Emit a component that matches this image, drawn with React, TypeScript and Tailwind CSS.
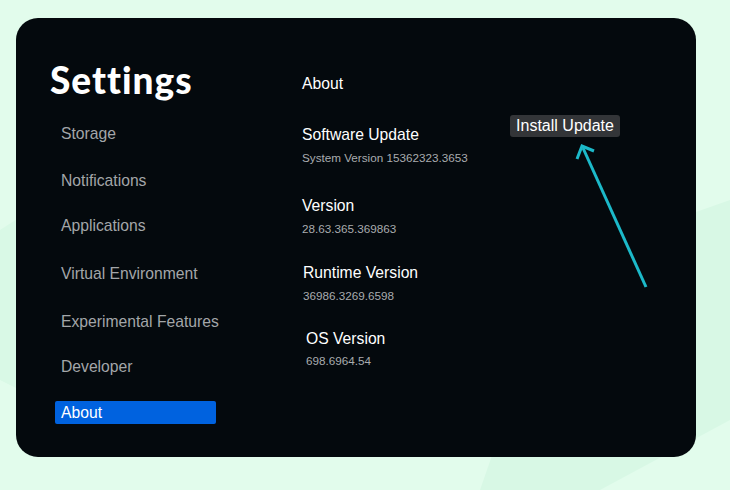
export default function App() {
  const items = [
    ["Storage", "mt-[23px]"],
    ["Notifications", "mt-[29px]"],
    ["Applications", "mt-[27px]"],
    ["Virtual Environment", "mt-[30px]"],
    ["Experimental Features", "mt-[30px]"],
    ["Developer", "mt-[27px]"],
  ];
  return (
    <div className="relative w-[730px] h-[490px] overflow-hidden bg-[#e2fcec]" style={{ fontFamily: '"Liberation Sans", Arial, sans-serif' }}>
      <svg className="absolute inset-0" width="730" height="490">
        <polygon points="0,230 140,140 260,300 120,440 0,380" fill="#d9f9e6" />
        <polygon points="560,260 730,200 730,420 600,490 480,490" fill="#d8f8e5" />
      </svg>
      <div className="absolute left-[16px] top-[18px] w-[680px] h-[439px] rounded-[22px] bg-[#04090d] flex">
        <div className="w-[286px] pl-[34px] pt-[40px] flex flex-col">
          <div className="text-white text-[37px] leading-[44px] font-black tracking-[1px]" style={{ fontFamily: 'Lato, sans-serif' }}>Settings</div>
          {items.map(([t, m]) => (
            <div key={t} className={`${m} pl-[11px] text-[15.7px] leading-[18px] text-[#a3a6a9]`}>{t}</div>
          ))}
          <div className="mt-[25px] ml-[5px] w-[161px] h-[23px] rounded-[2px] bg-[#0062df] text-white text-[15.7px] leading-[23px] pl-[6px]">About</div>
        </div>
        <div className="pt-[57px] flex flex-col text-white">
          <div className="text-[15.7px] leading-[18px]">About</div>
          <div className="mt-[33px] text-[15.7px] leading-[18px]">Software Update</div>
          <div className="mt-[7px] text-[11.7px] leading-[13px] text-[#a9acaf]">System Version 15362323.3653</div>
          <div className="mt-[33px] text-[15.7px] leading-[18px]">Version</div>
          <div className="mt-[7px] text-[11.7px] leading-[13px] text-[#a9acaf]">28.63.365.369863</div>
          <div className="mt-[29px] ml-[1px] text-[15.7px] leading-[18px]">Runtime Version</div>
          <div className="mt-[7px] ml-[1px] text-[11.7px] leading-[13px] text-[#a9acaf]">36986.3269.6598</div>
          <div className="mt-[28px] ml-[4px] text-[15.7px] leading-[18px]">OS Version</div>
          <div className="mt-[6px] ml-[4px] text-[11.7px] leading-[13px] text-[#a9acaf]">698.6964.54</div>
        </div>
        <div className="absolute left-[494px] top-[97px] w-[110px] h-[22px] rounded-[3px] bg-[#333538] text-white text-[16px] leading-[22px] text-center">Install Update</div>
        <svg className="absolute left-0 top-0" width="680" height="439">
          <line x1="630" y1="269" x2="567" y2="130" stroke="#1cb9c9" strokeWidth="3" />
          <polyline points="561,141 566,128 578,133" fill="none" stroke="#1cb9c9" strokeWidth="3" />
        </svg>
      </div>
    </div>
  );
}
